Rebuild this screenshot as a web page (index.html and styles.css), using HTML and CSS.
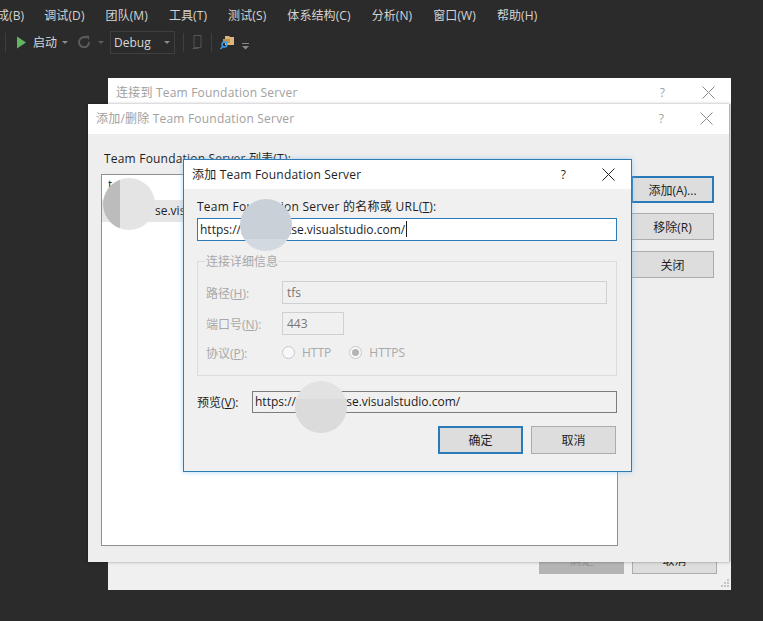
FILE: index.html
```html
<!DOCTYPE html>
<html lang="zh-CN">

<head>
    <meta charset="UTF-8">
    <meta name="viewport" content="width=device-width, initial-scale=1.0">
    <link rel="stylesheet" href="styles.css">
</head>

<body>
    <div class="menu-bar">
        <span class="menu-item first">成(B)</span>
        <span class="menu-item">调试(D)</span>
        <span class="menu-item">团队(M)</span>
        <span class="menu-item">工具(T)</span>
        <span class="menu-item">测试(S)</span>
        <span class="menu-item">体系结构(C)</span>
        <span class="menu-item">分析(N)</span>
        <span class="menu-item">窗口(W)</span>
        <span class="menu-item">帮助(H)</span>
    </div>
    <div class="tool-bar">
        <span class="tool-sep"></span>
        <svg class="play" width="11" height="13" viewBox="0 0 11 13" xmlns="http://www.w3.org/2000/svg">
            <path d="M1 0.5L10 6.5L1 12.5z" fill="#5fb760" />
        </svg>
        <span class="start-label">启动</span>
        <span class="caret"></span>
        <svg class="refresh" width="14" height="14" viewBox="0 0 14 14" fill="none" xmlns="http://www.w3.org/2000/svg">
            <path d="M9.5 2.8A5 5 0 1 0 12 7" stroke="#5c5c5c" stroke-width="2" />
            <path d="M8 0.5L12 1v4z" fill="#5c5c5c" />
        </svg>
        <span class="caret dim"></span>
        <div class="config-box">
            <span>Debug</span>
            <span class="caret"></span>
        </div>
        <span class="tool-sep"></span>
        <svg class="device" width="12" height="16" viewBox="0 0 12 16" fill="none" xmlns="http://www.w3.org/2000/svg">
            <path d="M3 1.5h7v12H3zM1.5 14.5h6" stroke="#555" />
        </svg>
        <span class="tool-sep"></span>
        <svg class="folder" width="15" height="15" viewBox="0 0 15 15" xmlns="http://www.w3.org/2000/svg">
            <path d="M5 1h4l1 1h4v8H5z" fill="#dcb67a" />
            <path d="M3 4h7v4H3z" fill="#b8935a" />
            <circle cx="4.5" cy="9.5" r="2.5" fill="none" stroke="#3d9ae8" stroke-width="1.4" />
            <path d="M3 11.5L0.5 14" stroke="#3d9ae8" stroke-width="1.6" />
        </svg>
        <svg class="more" width="7" height="7" viewBox="0 0 7 7" xmlns="http://www.w3.org/2000/svg">
            <path d="M0 0h7v1H0z" fill="#8a8a8a" />
            <path d="M0 3h7L3.5 6.5z" fill="#8a8a8a" />
        </svg>
    </div>

    <!-- 连接到 -->
    <div class="window window-back">
        <div class="title-bar">
            <span class="title dim-title">连接到 Team Foundation Server</span>
            <span class="help dim-title">?</span>
            <svg class="close" width="13" height="13" viewBox="0 0 13 13" xmlns="http://www.w3.org/2000/svg">
                <path d="M0.5 0.5L12.5 12.5M12.5 0.5L0.5 12.5" stroke="#8c8c8c" fill="none" />
            </svg>
        </div>
        <div class="back-footer">
            <button class="btn btn-muted">确定</button>
            <button class="btn">取消</button>
        </div>
        <svg class="grip" width="11" height="11" viewBox="0 0 11 11" xmlns="http://www.w3.org/2000/svg">
            <path d="M8 1h2v2H8zM5 4h2v2H5zM8 4h2v2H8zM2 7h2v2H2zM5 7h2v2H5zM8 7h2v2H8z" fill="#c4c4c4" />
        </svg>
    </div>

    <!-- 添加/删除 -->
    <div class="window window-mid">
        <div class="title-bar">
            <span class="title dim-title">添加/删除 Team Foundation Server</span>
            <span class="help dim-title">?</span>
            <svg class="close" width="13" height="13" viewBox="0 0 13 13" xmlns="http://www.w3.org/2000/svg">
                <path d="M0.5 0.5L12.5 12.5M12.5 0.5L0.5 12.5" stroke="#8c8c8c" fill="none" />
            </svg>
        </div>
        <div class="mid-body">
            <div class="list-col">
                <div class="list-label">Team Foundation Server 列表(<u>T</u>):</div>
                <div class="list-box">
                    <div class="list-head">t</div>
                    <div class="list-row">se.vis</div>
                </div>
            </div>
            <div class="side-buttons">
                <button class="btn btn-default">添加(A)...</button>
                <button class="btn">移除(R)</button>
                <button class="btn">关闭</button>
            </div>
        </div>
    </div>

    <!-- 添加 -->
    <div class="window window-front">
        <div class="title-bar">
            <span class="title">添加 Team Foundation Server</span>
            <span class="help">?</span>
            <svg class="close" width="13" height="13" viewBox="0 0 13 13" xmlns="http://www.w3.org/2000/svg">
                <path d="M0.5 0.5L12.5 12.5M12.5 0.5L0.5 12.5" stroke="#222" fill="none" />
            </svg>
        </div>
        <div class="front-body">
            <label class="field-label">Team Foundation Server 的名称或 URL(<u>T</u>):</label>
            <div class="text-input active">https://xxxxxxxxse.visualstudio.com/<span class="cursor"></span></div>
            <fieldset class="details">
                <legend>连接详细信息</legend>
                <div class="detail-row">
                    <span class="detail-label">路径(<u>H</u>):</span>
                    <div class="text-input disabled wide">tfs</div>
                </div>
                <div class="detail-row">
                    <span class="detail-label">端口号(<u>N</u>):</span>
                    <div class="text-input disabled port">443</div>
                </div>
                <div class="detail-row">
                    <span class="detail-label">协议(<u>P</u>):</span>
                    <span class="radio"></span>
                    <span class="radio-text">HTTP</span>
                    <span class="radio checked"></span>
                    <span class="radio-text">HTTPS</span>
                </div>
            </fieldset>
            <div class="preview-row">
                <span class="preview-label">预览(<u>V</u>):</span>
                <div class="text-input readonly">https://xxxxxxxxse.visualstudio.com/</div>
            </div>
            <div class="dialog-buttons">
                <button class="btn btn-default">确定</button>
                <button class="btn">取消</button>
            </div>
        </div>
    </div>

    <!-- redaction blobs -->
    <div class="blob blob-list"></div>
    <div class="blob blob-url"></div>
    <div class="blob blob-preview"></div>
</body>

</html>
```

FILE: styles.css
```css
body {
    background: #2b2b2c;
    color: #d8d8d8;
    font-family: "Open Sans", "Noto Sans CJK SC", sans-serif;
    font-size: 12px;
    height: 621px;
    margin: 0;
    overflow: hidden;
    padding: 0;
    position: relative;
}

.menu-bar {
    display: flex;
    height: 30px;
    line-height: 32px;
    overflow: hidden;
    white-space: nowrap;
}

.menu-item {
    color: #d4d4d4;
    letter-spacing: 0.1px;
    margin-left: 21px;
}

.menu-item.first {
    margin-left: -3px;
    margin-right: -1px;
}

.tool-bar {
    align-items: center;
    display: flex;
    height: 24px;
}

.tool-sep {
    background: #3f3f42;
    height: 19px;
    margin-left: 5px;
    width: 1px;
}

.play {
    margin-left: 10px;
}

.start-label {
    color: #d8d8d8;
    margin-left: 6px;
}

.caret {
    border-left: 3px solid transparent;
    border-right: 3px solid transparent;
    border-top: 3px solid #8a8a8a;
    height: 0;
    margin-left: 5px;
    width: 0;
}

.caret.dim {
    border-top-color: #5c5c5c;
    margin-left: 7px;
}

.refresh {
    margin-left: 9px;
}

.config-box {
    align-items: center;
    border: 1px solid #3f3f42;
    box-sizing: border-box;
    display: flex;
    height: 23px;
    justify-content: space-between;
    margin-left: 6px;
    padding: 0 4px 0 3px;
    width: 65px;
}

.config-box + .tool-sep {
    margin-left: 8px;
}

.device {
    margin-left: 7px;
}

.device + .tool-sep {
    margin-left: 8px;
}

.folder {
    margin-left: 8px;
}

.more {
    margin-left: 7px;
    margin-top: 9px;
}

.window {
    background: #eeeeee;
    box-sizing: border-box;
    color: #1e1e1e;
    position: absolute;
}

.window-back {
    background: #f0f0f0;
    height: 512px;
    left: 108px;
    top: 78px;
    width: 623px;
}

.window-mid {
    border-right: 1px solid #b5b5b5;
    box-shadow: 0 0 3px rgba(0, 0, 0, 0.35);
    height: 458px;
    left: 88px;
    top: 104px;
    width: 642px;
}

.window-front {
    background: #f0f0f0;
    border: 1px solid #2f7cb4;
    box-shadow: 0 0 5px rgba(120, 190, 240, 0.6);
    height: 313px;
    left: 183px;
    top: 159px;
    width: 449px;
}

.title-bar {
    align-items: center;
    background: #ffffff;
    box-sizing: border-box;
    display: flex;
    height: 29px;
    padding: 0 16px 1px 8px;
}

.window-back .title-bar {
    height: 26px;
    padding-bottom: 0;
    padding-top: 2px;
}

.window-mid .title-bar {
    height: 30px;
    padding-bottom: 2px;
}

.title {
    flex: 1;
    letter-spacing: 0.2px;
    white-space: nowrap;
}

.dim-title {
    color: #a0a0a0;
}

.help {
    margin-right: 37px;
}

.window-mid .help,
.window-front .help {
    margin-right: 36px;
}

.back-footer {
    bottom: 16px;
    display: flex;
    gap: 8px;
    position: absolute;
    right: 14px;
}

.btn {
    background: #dddddd;
    border: 1px solid #acacac;
    box-sizing: border-box;
    color: #1e1e1e;
    font-family: inherit;
    font-size: 12px;
    height: 28px;
    padding: 0;
    width: 85px;
}

.btn-default {
    border: 2px solid #2a7ab8;
}

.btn-muted {
    background: #b4b4b4;
    border-color: #b4b4b4;
    color: #999999;
}

.grip {
    bottom: 1px;
    position: absolute;
    right: 1px;
}

.mid-body {
    display: flex;
    padding: 17px 0 0 13px;
}

.list-col {
    width: 517px;
}

.list-label {
    letter-spacing: 0.2px;
    line-height: 16px;
    margin-left: 3px;
}

.list-box {
    background: #ffffff;
    border: 1px solid #8f8f8f;
    box-sizing: border-box;
    height: 372px;
    margin-top: 7px;
}

.list-head {
    height: 25px;
    line-height: 20px;
    padding-left: 6px;
}

.list-row {
    background: #e6e6e6;
    height: 22px;
    line-height: 22px;
    padding-left: 53px;
}

.side-buttons {
    display: flex;
    flex-direction: column;
    margin-left: 13px;
    margin-top: 25px;
}

.side-buttons .btn {
    height: 27px;
    margin-bottom: 10px;
    width: 83px;
}

.side-buttons .btn:nth-child(2) {
    margin-bottom: 11px;
}

.side-buttons .btn-default {
    border-color: #2a7ab8;
    height: 27px;
}

.front-body {
    padding: 10px 14px 0 13px;
}

.field-label {
    display: block;
    letter-spacing: 0.25px;
    line-height: 16px;
}

.text-input {
    background: #ffffff;
    border: 1px solid #8f8f8f;
    box-sizing: border-box;
    height: 23px;
    line-height: 21px;
    overflow: hidden;
    padding-left: 2px;
    white-space: nowrap;
}

.text-input.active {
    border-color: #2a7ab8;
    margin-top: 3px;
}

.cursor {
    background: #1e1e1e;
    display: inline-block;
    height: 16px;
    margin-left: 1px;
    vertical-align: -3px;
    width: 1px;
}

.text-input.disabled {
    background: #f0f0f0;
    border-color: #d0d0d0;
    color: #777777;
    padding-left: 4px;
}

.wide {
    width: 325px;
}

.port {
    width: 62px;
}

.details {
    border: 1px solid #dcdcdc;
    box-sizing: border-box;
    color: #a8a8a8;
    height: 124px;
    margin: 11px 0 0;
    padding: 11px 9px 0 8px;
}

.details legend {
    padding: 0;
}

.detail-row {
    align-items: center;
    display: flex;
    height: 23px;
    margin-bottom: 8px;
}

.detail-row:nth-child(3) {
    margin-bottom: 6px;
}

.detail-label {
    width: 76px;
}

.radio {
    background: #f8f8f8;
    border: 1px solid #c8c8c8;
    border-radius: 50%;
    box-sizing: border-box;
    height: 13px;
    margin-left: 0;
    position: relative;
    width: 13px;
}

.radio.checked {
    margin-left: 18px;
}

.radio.checked::after {
    background: #b4b4b4;
    border-radius: 50%;
    content: "";
    height: 7px;
    left: 2px;
    position: absolute;
    top: 2px;
    width: 7px;
}

.radio-text {
    margin-left: 7px;
}

.preview-row {
    align-items: center;
    display: flex;
    margin-top: 15px;
}

.preview-label {
    width: 55px;
}

.text-input.readonly {
    background: #f0f0f0;
    border-color: #7c7c7c;
    flex: 1;
    height: 22px;
    line-height: 20px;
}

.dialog-buttons {
    display: flex;
    gap: 8px;
    justify-content: flex-end;
    margin-right: 1px;
    margin-top: 13px;
}

.blob {
    border-radius: 50%;
    height: 52px;
    position: absolute;
    width: 52px;
}

.blob-list {
    background: linear-gradient(90deg, #bcbcbc 0 17px, #e4e4e4 17px);
    left: 103px;
    top: 178px;
}

.blob-url {
    background: linear-gradient(180deg, #c9d0d8 0 40px, #d2d9e0 40px);
    left: 240px;
    top: 199px;
}

.blob-preview {
    background: linear-gradient(180deg, #e2e2e2 0 18px, #dbdbdb 18px);
    left: 295px;
    top: 381px;
}
```
